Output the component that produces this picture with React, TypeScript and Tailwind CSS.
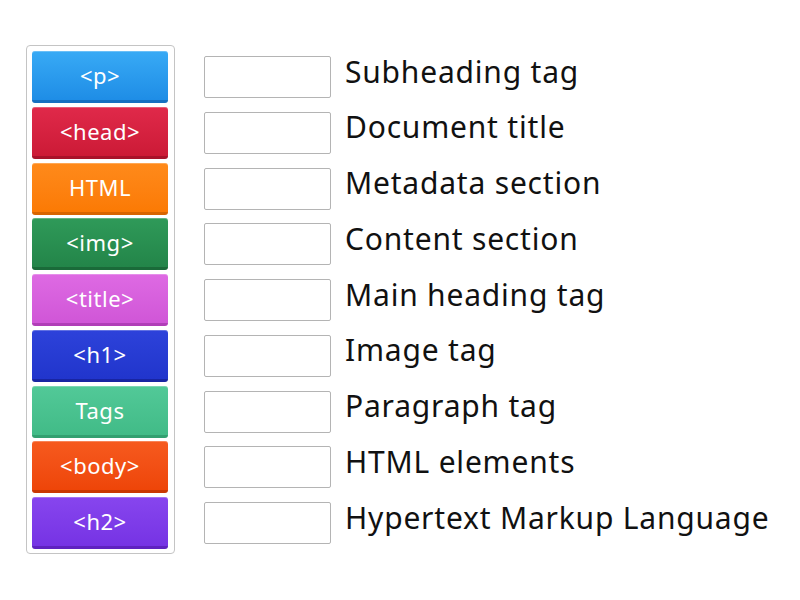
import React from 'react';

const tiles = [
  { label: '<p>', cls: 'from-[#38aaf5] to-[#1e8de6] border-[#176fc0]' },
  { label: '<head>', cls: 'from-[#e0294a] to-[#cc1a36] border-[#a8122a]' },
  { label: 'HTML', cls: 'from-[#ff8a1a] to-[#fb7a04] border-[#d86500]' },
  { label: '<img>', cls: 'from-[#2f9a59] to-[#238549] border-[#1a6a39]' },
  { label: '<title>', cls: 'from-[#de6ae3] to-[#d056d7] border-[#b03eb7]' },
  { label: '<h1>', cls: 'from-[#2d42da] to-[#2135cc] border-[#1825a2]' },
  { label: 'Tags', cls: 'from-[#52c998] to-[#41bb87] border-[#32a070]' },
  { label: '<body>', cls: 'from-[#f65a1e] to-[#ee4508] border-[#c93802]' },
  { label: '<h2>', cls: 'from-[#8745ee] to-[#7633e4] border-[#5f22c0]' },
];

const prompts = [
  'Subheading tag',
  'Document title',
  'Metadata section',
  'Content section',
  'Main heading tag',
  'Image tag',
  'Paragraph tag',
  'HTML elements',
  'Hypertext Markup Language',
];

const font = { fontFamily: '"Noto Sans", "Open Sans", sans-serif' };

export default function App() {
  return (
    <div className="w-[800px] h-[600px] bg-white flex items-start pt-[45px] pl-[26px]" style={font}>
      <div className="w-[149px] border border-[#c4c4c4] rounded-[4px] pt-[5px] pb-[4px] pl-[5px] pr-[6px] flex flex-col gap-[3.75px]">
        {tiles.map((t) => (
          <div
            key={t.label}
            className={`h-[52px] rounded-[3px] bg-gradient-to-b border-b-[3px] ${t.cls} flex items-center justify-center text-white text-[22px] tracking-[0.5px] shadow-[inset_0_1px_0_rgba(255,255,255,0.25)]`}
          >
            {t.label}
          </div>
        ))}
      </div>
      <div className="ml-[29px] pt-[6px] flex flex-col gap-[3.75px]">
        {prompts.map((p) => (
          <div key={p} className="h-[52px] flex items-center">
            <div className="w-[127px] h-[42px] border border-[#b4b4b4] rounded-[2px] bg-white" />
            <span className="ml-[14px] mb-[11px] text-[30px] tracking-[0.8px] text-[#111] whitespace-nowrap leading-none">{p}</span>
          </div>
        ))}
      </div>
    </div>
  );
}
